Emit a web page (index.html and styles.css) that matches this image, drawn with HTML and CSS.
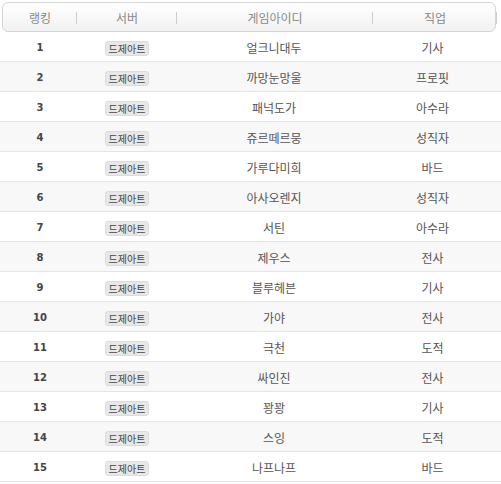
FILE: index.html
```html
<!DOCTYPE html>
<html lang="ko">
<head>
<meta charset="utf-8">
<link rel="stylesheet" href="styles.css">
</head>
<body>
<div class="rank-table">
  <div class="head">
    <div class="c c-rank">랭킹</div>
    <div class="c c-srv">서버</div>
    <div class="c c-id">게임아이디</div>
    <div class="c c-job">직업</div>
  </div>
  <div class="row"><div class="c c-rank num">1</div><div class="c c-srv"><span class="badge">드제아트</span></div><div class="c c-id">얼크니대두</div><div class="c c-job">기사</div></div>
  <div class="row alt"><div class="c c-rank num">2</div><div class="c c-srv"><span class="badge">드제아트</span></div><div class="c c-id">까망눈망울</div><div class="c c-job">프로핏</div></div>
  <div class="row"><div class="c c-rank num">3</div><div class="c c-srv"><span class="badge">드제아트</span></div><div class="c c-id">패넉도가</div><div class="c c-job">아수라</div></div>
  <div class="row alt"><div class="c c-rank num">4</div><div class="c c-srv"><span class="badge">드제아트</span></div><div class="c c-id">쥬르떼르뭉</div><div class="c c-job">성직자</div></div>
  <div class="row"><div class="c c-rank num">5</div><div class="c c-srv"><span class="badge">드제아트</span></div><div class="c c-id">가루다미희</div><div class="c c-job">바드</div></div>
  <div class="row alt"><div class="c c-rank num">6</div><div class="c c-srv"><span class="badge">드제아트</span></div><div class="c c-id">아사오렌지</div><div class="c c-job">성직자</div></div>
  <div class="row"><div class="c c-rank num">7</div><div class="c c-srv"><span class="badge">드제아트</span></div><div class="c c-id">서틴</div><div class="c c-job">아수라</div></div>
  <div class="row alt"><div class="c c-rank num">8</div><div class="c c-srv"><span class="badge">드제아트</span></div><div class="c c-id">제우스</div><div class="c c-job">전사</div></div>
  <div class="row"><div class="c c-rank num">9</div><div class="c c-srv"><span class="badge">드제아트</span></div><div class="c c-id">블루헤븐</div><div class="c c-job">기사</div></div>
  <div class="row alt"><div class="c c-rank num">10</div><div class="c c-srv"><span class="badge">드제아트</span></div><div class="c c-id">가야</div><div class="c c-job">전사</div></div>
  <div class="row"><div class="c c-rank num">11</div><div class="c c-srv"><span class="badge">드제아트</span></div><div class="c c-id">극천</div><div class="c c-job">도적</div></div>
  <div class="row alt"><div class="c c-rank num">12</div><div class="c c-srv"><span class="badge">드제아트</span></div><div class="c c-id">싸인진</div><div class="c c-job">전사</div></div>
  <div class="row"><div class="c c-rank num">13</div><div class="c c-srv"><span class="badge">드제아트</span></div><div class="c c-id">꽝꽝</div><div class="c c-job">기사</div></div>
  <div class="row alt"><div class="c c-rank num">14</div><div class="c c-srv"><span class="badge">드제아트</span></div><div class="c c-id">스잉</div><div class="c c-job">도적</div></div>
  <div class="row"><div class="c c-rank num">15</div><div class="c c-srv"><span class="badge">드제아트</span></div><div class="c c-id">나프나프</div><div class="c c-job">바드</div></div>
</div>
</body>
</html>
```
FILE: styles.css
```css
html, body {
  margin: 0;
  padding: 0;
  background: #ffffff;
}
* {
  box-sizing: border-box;
}
body {
  font-family: "Noto Sans CJK KR", "Noto Sans", sans-serif;
  font-size: 12px;
  color: #555;
}
.rank-table {
  width: 501px;
  padding-top: 2px;
}
.head {
  display: grid;
  grid-template-columns: 74px 100px 196px 124px;
  height: 30px;
  margin-left: 2px;
  margin-right: 5px;
  border: 1px solid #d6d6d6;
  border-radius: 6px;
  background: linear-gradient(#ffffff, #f1f1f1);
  color: #888;
  align-items: center;
}
.head .c {
  text-align: center;
  position: relative;
  line-height: 28px;
  padding-top: 1px;
}
.head .c::after {
  content: "";
  position: absolute;
  right: 0;
  top: 9px;
  width: 1px;
  height: 12px;
  background: #cdcdcd;
}
.row {
  display: grid;
  grid-template-columns: 76px 100px 196px 129px;
  height: 30px;
  border-bottom: 1px solid #e4e4e4;
  align-items: center;
  color: #555;
  padding-top: 1px;
}
.row.alt {
  background: #f8f8f8;
}
.row .c {
  text-align: center;
}
.row .c-job {
  margin-left: -8px;
}
.num {
  font-family: "DejaVu Sans", sans-serif;
  font-weight: bold;
  font-size: 10px;
  color: #444;
}
.row .c-rank {
  padding-left: 4px;
}
.row .c-srv {
  padding-left: 2px;
}
.badge {
  display: inline-block;
  font-size: 10px;
  line-height: 13px;
  padding: 0 3px;
  border: 1px solid #dcdcdc;
  border-radius: 3px;
  background: #e8e8e8;
  color: #444;
}
```
